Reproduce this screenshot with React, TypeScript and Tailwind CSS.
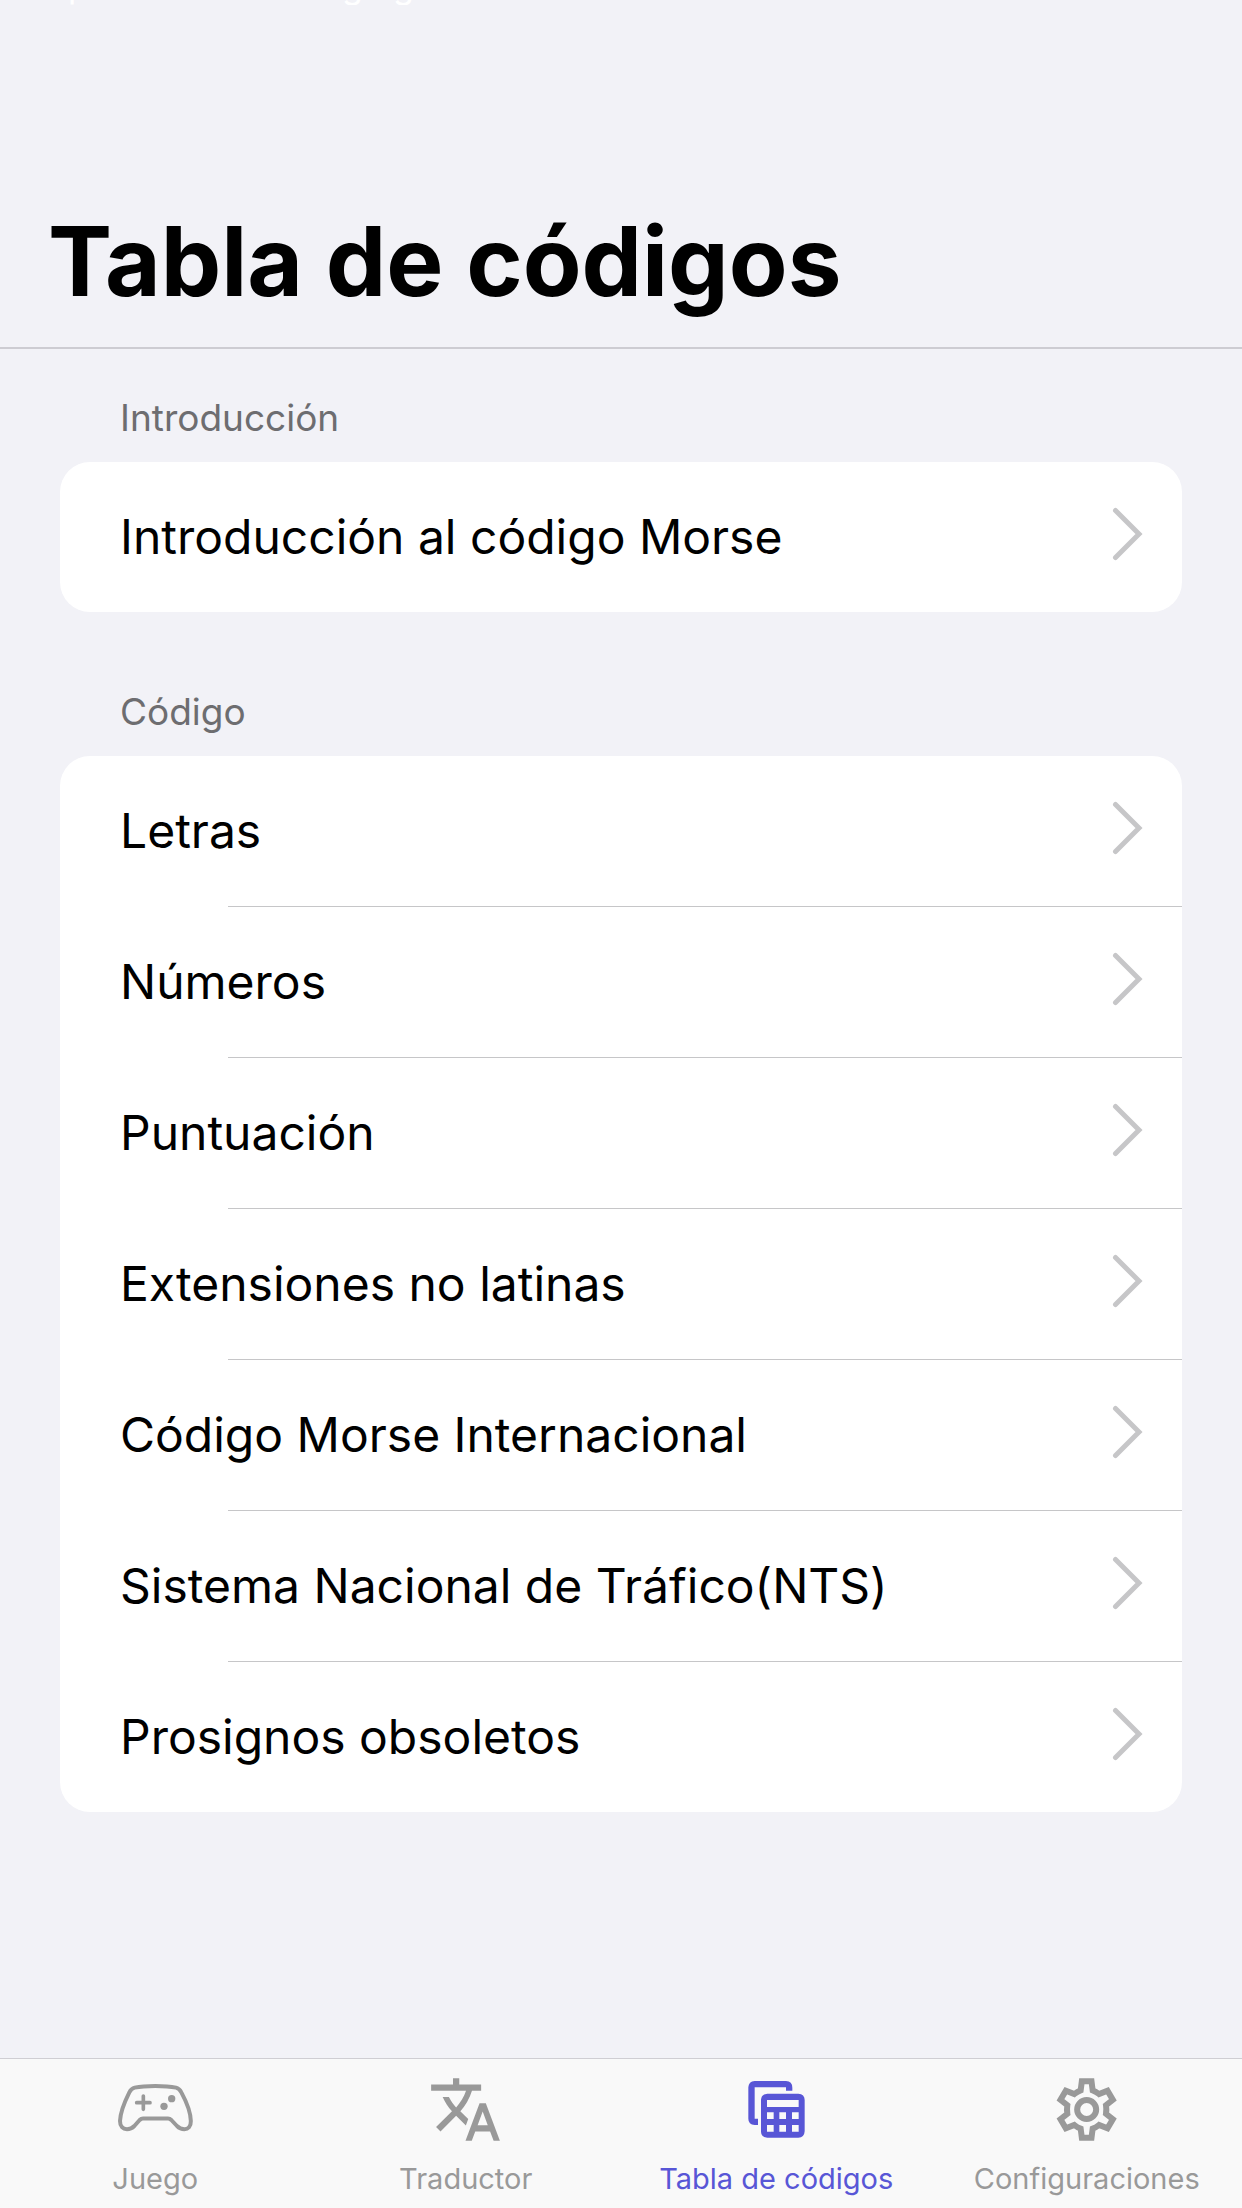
import React, { useState } from 'react';
import { MdTranslate } from 'react-icons/md';

interface Section {
  title: string;
  items: string[];
}

const SECTIONS: Section[] = [
  { title: 'Introducción', items: ['Introducción al código Morse'] },
  {
    title: 'Código',
    items: [
      'Letras',
      'Números',
      'Puntuación',
      'Extensiones no latinas',
      'Código Morse Internacional',
      'Sistema Nacional de Tráfico(NTS)',
      'Prosignos obsoletos',
    ],
  },
];

const Chevron = () => (
  <svg className="w-8 h-16 shrink-0" viewBox="0 0 32 64" fill="none" stroke="#c6c6c8" strokeWidth="5" strokeLinecap="round" aria-hidden="true">
    <path d="M3.5 5.500 27 29 3.500 52.500" />
  </svg>
);

const GamepadIcon = () => (
  <svg className="size-[75px]" viewBox="84 66 225 225" fill="none" stroke="currentColor" aria-hidden="true">
    <path
      strokeWidth="12"
      strokeLinejoin="round"
      d="M196 108C220 108 244 110 258 113C267 115 270 119 274 127C287 151 302 187 302.500 213C303 230 294 237.500 283 237.500C274 237.500 267 234 261 228L244 210C241 207 239 205.500 234 205.500H159C154 205.500 152 207 149 210L133 228C127 234 120 237.500 111 237.500C99 237.500 90 230 90 213C91 187 106 151 118 127C122 119 125 115 134 113C148 110 172 108 196 108Z"
    />
    <path strokeWidth="11" strokeLinecap="round" d="M160 138v40M140 158h40" />
    <circle cx="222" cy="169" r="11" fill="currentColor" stroke="none" />
    <circle cx="245" cy="146" r="11" fill="currentColor" stroke="none" />
  </svg>
);

const TableIcon = () => (
  <svg className="size-[75px]" viewBox="267 66 225 225" fill="currentColor" aria-hidden="true">
    <path d="M314 93H408Q427 94 427 113V122H408V112H314V206H324V225H314Q295 224 295 206V112Q296 94 314 93Z" />
    <path
      fillRule="evenodd"
      d="M352 131H445Q464 132 464 150V244Q463 263 445 263H352Q333 262 333 244V150Q334 132 352 131ZM351 150V171H446V150ZM351 187V207H371V187ZM388 187V207H408V187ZM426 187V207H446V187ZM351 225V245H371V225ZM388 225V245H408V225ZM426 225V245H446V225Z"
    />
  </svg>
);

const GearIcon = () => (
  <svg className="size-[75px]" viewBox="267 66 225 225" fill="none" stroke="currentColor" aria-hidden="true">
    <path
      strokeWidth="18"
      d="M365.500 94H394.500L398 121Q407 124 417 132L442.500 122L458.500 149.500L438 165.500Q440 178.500 438 191.500L458.500 207.500L442.500 235L417 225Q407 233 398 236L394.500 263H365.500L362 236Q353 233 343 225L317.500 235L301.500 207.500L322 191.500Q320 178.500 322 165.500L301.500 149.500L317.500 122L343 132Q353 124 362 121Z"
    />
    <circle cx="380" cy="178.500" r="28.500" strokeWidth="18" />
  </svg>
);

const TABS = [
  { label: 'Juego', icon: <GamepadIcon /> },
  { label: 'Traductor', icon: <MdTranslate className="size-[75px]" aria-hidden="true" /> },
  { label: 'Tabla de códigos', icon: <TableIcon /> },
  { label: 'Configuraciones', icon: <GearIcon /> },
];

const App: React.FC = () => {
  const [activeTab, setActiveTab] = useState('Tabla de códigos');

  return (
    <div className="min-h-screen flex flex-col bg-[#f2f2f7] text-black font-['Inter','Liberation_Sans',sans-serif]">
      {/* Large title */}
      <header className="relative pt-[201px] pb-[26px] px-12 border-b-2 border-[#cdccd2]">
        {/* Line scrolled off the top, only its descenders show */}
        <div
          className="absolute top-0 left-0 h-[5px] pl-[68px] pb-[2px] overflow-hidden flex items-end text-white text-[34px] leading-[34px]"
          aria-hidden="true"
        >
          <span className="w-[274px]">p</span>
          <span className="w-[51px]">g</span>
          <span>g</span>
        </div>
        <h1 className="text-[96px] leading-[120px] font-bold">Tabla de códigos</h1>
      </header>

      <main className="flex-1 px-[60px]">
        {SECTIONS.map((section) => (
          <section key={section.title} className="pt-[45px] pb-[31px]">
            <h2 className="px-[60px] mb-[20px] text-[37px] leading-[48px] text-[#6d6d70]">{section.title}</h2>
            <ul className="bg-white rounded-[30px] overflow-hidden">
              {section.items.map((item, index) => (
                <li key={item}>
                  {index > 0 && <div className="ml-[168px] h-px bg-[#c6c6c8]" />}
                  <button className="w-full h-[150px] pl-[60px] pr-[38px] flex items-center justify-between text-left text-[48px]">
                    {item}
                    <Chevron />
                  </button>
                </li>
              ))}
            </ul>
          </section>
        ))}
      </main>

      {/* Tab bar */}
      <nav className="grid grid-cols-4 bg-[#f9f9f9] border-t border-[#cfced3]">
        {TABS.map((tab) => (
          <button
            key={tab.label}
            onClick={() => setActiveTab(tab.label)}
            className={`pt-[13px] pb-[11px] flex flex-col items-center gap-[14px] text-[29px] leading-[36px] ${
              activeTab === tab.label ? 'text-[#5856d6]' : 'text-[#999999]'
            }`}
          >
            {tab.icon}
            {tab.label}
          </button>
        ))}
      </nav>
    </div>
  );
};

export default App;
